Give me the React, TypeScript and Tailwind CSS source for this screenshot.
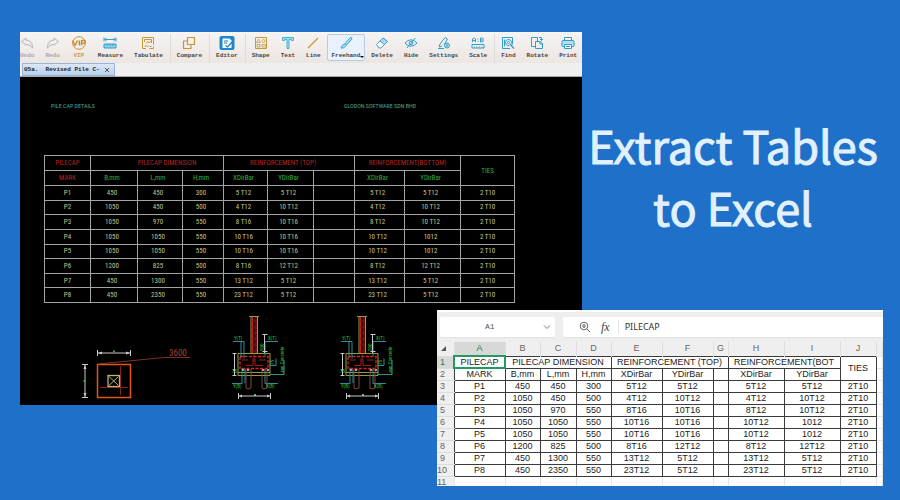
import React from "react";

const AMBER = "#c39a3a";
const CYAN = "#2f9fcb";

type IconProps = { children: React.ReactNode; color?: string; width?: number };

function Icon({ children, color = CYAN, width = 14 }: IconProps) {
  return (
    <svg
      width={width}
      height="14"
      viewBox={`0 0 ${width} 14`}
      fill="none"
      stroke={color}
      strokeWidth="1"
      strokeLinejoin="round"
      aria-hidden="true"
      className="shrink-0"
    >
      {children}
    </svg>
  );
}

const icons = {
  undo: (
    <Icon color="#b5b3b3">
      <path d="M1.5 5.5 6 2v2.2c4.3 0 6.5 2.7 6.5 8C11 9.500 9.300 8.700 6 8.700V9z" />
    </Icon>
  ),
  redo: (
    <Icon color="#b5b3b3">
      <path d="M12.5 5.5 8 2v2.2c-4.3 0-6.5 2.7-6.5 8C3 9.500 4.700 8.700 8 8.700V9z" />
    </Icon>
  ),
  vip: (
    <Icon color="#c8922c" width={16}>
      <circle cx="8" cy="7" r="6.300" />
      <path d="M1.500 4.500 4 9.500 6.500 4.500M8.300 4.500v5M10.500 9.500v-5h2.300c2 0 2 2.700 0 2.700h-2.300" strokeWidth="1.500" />
    </Icon>
  ),
  measure: (
    <Icon>
      <path d="M1 1.500v4M13 1.500v4M1.500 3.500h11M3.500 2 1.800 3.500l1.700 1.500M10.500 2l1.700 1.500-1.700 1.500" />
      <rect x="1" y="8" width="12" height="4" fill="#8fd2e8" />
      <path d="M4 8v2M7 8v2M10 8v2" />
    </Icon>
  ),
  tabulate: (
    <Icon color={AMBER}>
      <path d="M5 12.500H1.500v-11h11v7M8.500 12.500h4v-2M3.500 6V3.500h7V7M3.500 10h4M5 7.500 7 5.500l1 1.500 2-2M8.500 10.500h2" />
    </Icon>
  ),
  compare: (
    <Icon color={AMBER}>
      <path d="M5.500 1.500h7v7h-7zM5.500 5h-4v7.500h7.500v-4" strokeWidth="1.200" />
    </Icon>
  ),
  editor: (
    <Icon width={16} color="#1680cc">
      <rect x="0.500" y="0" width="15" height="14" rx="2" fill="#1b86d1" stroke="none" />
      <path d="M3.500 2.500h7l2 2V12h-9z" fill="#fff" stroke="none" />
      <path d="M5 5h4M5 7h3M6.500 9.500l2 1.500 4.500-5" strokeWidth="1.200" />
    </Icon>
  ),
  shape: (
    <Icon color={AMBER}>
      <rect x="1.500" y="1.500" width="11" height="11" />
      <path d="M2.500 6.500 4.500 3l2 3.500zM3 8.500h3v2.500H3zM8 8.500h3.500v2.500H8z" strokeWidth="0.800" />
      <circle cx="9.500" cy="5" r="1.500" strokeWidth="0.800" />
    </Icon>
  ),
  text: (
    <Icon color="#4ab2d8">
      <path d="M1.500 4.500v-3h11v3h-2v-1H8v9H6v-9H3.500v1z" fill="#9edcf0" />
    </Icon>
  ),
  line: (
    <Icon color={AMBER}>
      <path d="M2 12 12 2" strokeWidth="1.200" />
    </Icon>
  ),
  freehand: (
    <Icon>
      <path d="M6 7.500 11.500 1.500q2 0 1.200 1.700L7.500 9zM5.500 8 7 9.500 4.500 12H2q1-.8 1.200-2.500z" fill="#b5e4f5" />
    </Icon>
  ),
  remove: (
    <Icon color="#4a9fc6">
      <path d="M1.500 8.500 8 2l4.500 3.500L6 12H4z" fill="#fff" />
      <path d="M5 5 8 2l4.500 3.500-3 3z" fill="#a5def2" />
    </Icon>
  ),
  hide: (
    <Icon>
      <path d="M1 7q6-6.500 12 0-6 6.500-12 0zM11.500 2l-8.500 10" />
      <circle cx="7" cy="7" r="1.800" />
    </Icon>
  ),
  settings: (
    <Icon>
      <path d="M3 8 8 1.500l2.500 1.500L7 9M3 8l-1 3 3-1M1 12.500h6" />
      <circle cx="10" cy="9.500" r="2.500" fill="#c5e9f5" />
      <circle cx="10" cy="9.500" r="0.800" />
    </Icon>
  ),
  scale: (
    <Icon>
      <path d="M1.500 6V3l1-1h1l1 1v3M1.500 4.500h3M9.500 6V2h2l1 1-1 1 1 1-1 1zM9.500 4h2M7 2.500v1M7 5v1" />
      <rect x="1" y="8.500" width="12" height="3.500" />
      <path d="M3.500 10.500V12M6 10.500V12M8.500 10.500V12M11 10.500V12" strokeWidth="0.700" />
    </Icon>
  ),
  find: (
    <Icon>
      <path d="M9 12.500H1.500v-11h10v7M3.500 3.500v7" />
      <circle cx="7.500" cy="6.500" r="3" />
      <circle cx="7.500" cy="6.500" r="1" />
      <path d="m9.700 8.700 3.300 3.800" strokeWidth="1.300" />
    </Icon>
  ),
  rotate: (
    <Icon>
      <path d="M5.500 10.500h-4v-9h6v4M9 1.500h2.500V4M10 3l1.500 1.500L13 3M5.500 5.500h5l2 2v5h-7zM10 5.500v2.500h2.500" />
    </Icon>
  ),
  print: (
    <Icon>
      <path d="M3.500 4.500v-3h7v3" />
      <rect x="1" y="4.500" width="12" height="6" rx="1" fill="#b5e2f2" />
      <path d="M3.500 8.500h7v4h-7z" fill="#fff" />
      <path d="M5 10.500h4" />
    </Icon>
  ),
};

type Tool = { label: string; icon: React.ReactNode; tone?: string };

const toolGroups: Tool[][] = [
  [
    { label: "Undo", icon: icons.undo, tone: "text-[#aaa8a8]" },
    { label: "Redo", icon: icons.redo, tone: "text-[#aaa8a8]" },
    { label: "VIP", icon: icons.vip, tone: "text-[#c79c4b]" },
    { label: "Measure", icon: icons.measure },
    { label: "Tabulate", icon: icons.tabulate },
  ],
  [{ label: "Compare", icon: icons.compare }],
  [{ label: "Editor", icon: icons.editor }],
  [
    { label: "Shape", icon: icons.shape },
    { label: "Text", icon: icons.text },
    { label: "Line", icon: icons.line },
    { label: "Freehand", icon: icons.freehand },
    { label: "Delete", icon: icons.remove },
    { label: "Hide", icon: icons.hide },
    { label: "Settings", icon: icons.settings },
    { label: "Scale", icon: icons.scale },
  ],
  [
    { label: "Find", icon: icons.find },
    { label: "Rotate", icon: icons.rotate },
    { label: "Print", icon: icons.print },
  ],
];

function ToolButton({ label, icon, tone = "text-[#444]" }: Tool) {
  const active = label === "Freehand";
  return (
    <button
      type="button"
      aria-pressed={active}
      className={`relative flex shrink-0 flex-col items-center border pt-px ${
        active ? "-mx-[5px] rounded-xs border-[#b7cbe8] bg-[#e9f1fb] px-1" : "-mx-px border-transparent"
      }`}
    >
      {icon}
      <span className={`mt-0.5 h-2 text-[6px] leading-[8px] font-bold whitespace-nowrap ${tone}`}>{label}</span>
      {active && (
        <span className="absolute right-0 bottom-0.5 border-x-2 border-t-2 border-x-transparent border-t-black" />
      )}
    </button>
  );
}

const schedule = [
  ["P1", "450", "450", "300", "5T12", "5T12", "", "5T12", "5T12", "2T10"],
  ["P2", "1050", "450", "500", "4T12", "10T12", "", "4T12", "10T12", "2T10"],
  ["P3", "1050", "970", "550", "8T16", "10T16", "", "8T12", "10T12", "2T10"],
  ["P4", "1050", "1050", "550", "10T16", "10T16", "", "10T12", "1012", "2T10"],
  ["P5", "1050", "1050", "550", "10T16", "10T16", "", "10T12", "1012", "2T10"],
  ["P6", "1200", "825", "500", "8T16", "12T12", "", "8T12", "12T12", "2T10"],
  ["P7", "450", "1300", "550", "13T12", "5T12", "", "13T12", "5T12", "2T10"],
  ["P8", "450", "2350", "550", "23T12", "5T12", "", "23T12", "5T12", "2T10"],
];

const subHeads = ["MARK", "B,mm", "L,mm", "H,mm", "XDirBar", "YDirBar", "", "XDirBar", "YDirBar"];

// Bar marks are lettered with a thin gap between the count and the bar type.
const cadText = (value: string) => value.replace("T", "\u2009T");

function CadTable() {
  const cell = "border border-[#a3a3a3] py-0 pl-0 font-normal";
  return (
    <table className="h-[148px] w-[471px] table-fixed border-collapse text-center text-[7px] leading-[10px] text-[#c4c48c]">
      <colgroup>
        <col className="w-[46px]" />
        <col className="w-[47px]" />
        <col className="w-[45px]" />
        <col className="w-[41px]" />
        <col className="w-[44px]" />
        <col className="w-[46px]" />
        <col className="w-[41px]" />
        <col className="w-[50px]" />
        <col className="w-[56px]" />
        <col className="w-[54px]" />
      </colgroup>
      <thead>
        <tr className="h-[15px] text-[#b32424]">
          <th className={cell}>PILECAP</th>
          <th className="border border-[#a3a3a3] py-0 pr-0 pl-5 font-normal" colSpan={3}>PILECAP DIMENSION</th>
          <th className={`${cell} pr-3`} colSpan={3}>REINFORCEMENT (TOP)</th>
          <th className={cell} colSpan={2}>REINFORCEMENT(BOTTOM)</th>
          <th className={`${cell} text-[#2fae42]`} rowSpan={2}>TIES</th>
        </tr>
        <tr className="h-[15px]">
          {subHeads.map((head, i) => (
            <th key={i} className={`${cell} ${i === 0 ? "text-[#b32424]" : "pr-1 text-[#2fae42]"}`}>
              {head}
            </th>
          ))}
        </tr>
      </thead>
      <tbody>
        {schedule.map((row) => (
          <tr key={row[0]}>
            {row.map((value, i) => (
              <td key={i} className={`${cell} ${i > 0 && i < 9 ? "pr-1" : "pr-0"}`}>{cadText(value)}</td>
            ))}
          </tr>
        ))}
      </tbody>
    </table>
  );
}

function PlanView() {
  return (
    <svg width="110" height="62" viewBox="0 -6 110 62" fill="none" className="shrink-0">
      <g stroke="#c9c9c9" strokeWidth="1">
        <path d="M17.500 1v6M50.500 1v6M18 4h32M2 15.500h6M2 48.500h6M5 16v32" />
      </g>
      <g fill="#c9c9c9">
        <path d="m18 4 4-1.500v3zM50 4l-4-1.500v3zM5 16l-1.500 4h3zM5 48l-1.500-4h3z" />
      </g>
      <path d="M33 2.500h2M4.500 31v2" stroke="#2fae42" strokeWidth="2" />
      <path d="M40.500 17v29M20 38.500h28" stroke="#8f1d1d" />
      <rect x="17.500" y="15.500" width="33" height="33" stroke="#e0561c" strokeWidth="1.500" />
      <g stroke="#b5b573">
        <rect x="28" y="26.500" width="11.500" height="11" strokeWidth="1.300" />
        <path d="m29 27.500 9.500 9M38.500 27.500l-9.500 9" />
      </g>
      <path d="M18 15 84 8.500h26" stroke="#9d3d2c" strokeWidth="0.800" />
      <text x="89" y="7" fontSize="9" fill="#a8442f">3600</text>
    </svg>
  );
}

function SectionView() {
  return (
    <svg width="70" height="92" viewBox="0 0 70 92" fill="none" className="shrink-0">
      <path d="M26.500 4v36M30 4v36" stroke="#c81e1e" />
      <path d="M26 8h5M26 14h5M26 20h5M26 26h5M26 32h5M26 38h5M28 5v44" stroke="#7d1717" />
      <g stroke="#9c9a45">
        <path d="M25 3v37M31.500 3v37M23 3.500h10M12 40.500h32v22H12zM12 59.500h32" />
      </g>
      <path d="M14 43.500h28v12H14z" stroke="#e02020" strokeWidth="1.300" strokeDasharray="3 1.500" />
      <path d="M20 52.500h7v-7M29 45.500v7h8M16 47h6M33 47h7" stroke="#a81b1b" />
      <g stroke="#2c8d9c">
        <path d="M7 28.500h11v17M15 28.500v16M52 28.500H39v14M6 70.500h10V55M19 56v14M39 56v14.500h13M44 52.500h6v-7M44 61.500h14V47" />
      </g>
      <g stroke="#c9c9c9">
        <path d="M8.500 40v22M6.500 40.500h4M6.500 62.500h4M38.500 21v19M36.500 21.500h5M36.500 38.500h5M12.500 80v6M44.500 80v6M13 83h31" />
      </g>
      <path d="m13 83 3-1.500v3zM44 83l-3-1.500v3z" fill="#c9c9c9" />
      <path d="M20 58v17M25 58v17M36 58v17M41 58v17M18 57h8M35 57h8M20 75l2 1 3-1M36 75l2 1 3-1" stroke="#7c4a40" />
      <path d="M16 57h2M21 57h2M36 57h2M41 57h2M28 82h2M8 56v2" stroke="#9adbe2" strokeWidth="1.500" />
      <g fill="#31c043" fontSize="5">
        <text x="8" y="27">Y(T)</text>
        <text x="42" y="27">X(T)</text>
        <text x="7" y="75">Y(B)</text>
        <text x="40" y="75">X(B)</text>
        <text x="6" y="60">75</text>
        <text transform="translate(37.500 38) rotate(-90)">500</text>
        <text transform="translate(48 52) rotate(-90)">75</text>
        <text transform="translate(58 62) rotate(-90)">Lean Concrete</text>
      </g>
    </svg>
  );
}

function CadWindow() {
  return (
    <section className="min-w-0 flex-1 overflow-hidden bg-black" aria-label="Drawing viewer">
      <div className="flex h-[31px] overflow-hidden border-t border-[#f8f8fb] bg-linear-to-b from-[#f6f3f3] to-[#ece6e2] pt-px font-['Liberation_Mono',monospace]">
        {toolGroups.map((group, i) => (
          <div
            key={i}
            className={`flex shrink-0 items-start gap-[11px] ${
              i > 0 ? "ml-[7px] border-l border-[#dedada] pl-1.5" : ""
            }`}
          >
            {group.map((tool) => (
              <ToolButton key={tool.label} {...tool} />
            ))}
          </div>
        ))}
      </div>
      <div className="flex h-[14px] items-end border-b border-[#a7a7a7] bg-[#efefef] pl-0.5">
        <button
          type="button"
          className="flex h-[13px] items-center gap-1 border border-[#9ab4d8] bg-linear-to-b from-[#dce8f7] to-[#b9cfec] pr-1 pl-px font-['Liberation_Mono',monospace] text-[6px] leading-[8px] font-bold text-[#222]"
        >
          <span className="whitespace-pre">05a.  Revised Pile C-</span>
          <svg width="6" height="6" viewBox="0 0 6 6" stroke="#555" aria-hidden="true">
            <path d="m1 1 4 4M5 1 1 5" />
          </svg>
        </button>
      </div>
      <div className="flex flex-col pt-6 font-['Liberation_Sans_Narrow','Roboto_Condensed','Liberation_Sans',sans-serif]">
        <div className="flex gap-[249px] pl-[31px] text-[6px] leading-[10px] whitespace-nowrap text-[#4fa596]">
          <span>PILE CAP DETAILS</span>
          <span>GLODON SOFTWARE SDN BHD</span>
        </div>
        <div className="mt-11 pl-6">
          <CadTable />
        </div>
        <div className="mt-2.5 flex items-end gap-9 pl-[60px]">
          <PlanView />
          <div className="flex gap-[38px]">
            <SectionView />
            <SectionView />
          </div>
        </div>
      </div>
    </section>
  );
}

const letters = ["A", "B", "C", "D", "E", "F", "G", "H", "I", "J", ""];

function Sheet() {
  const box = "border border-[#3a3a3a] p-0 text-center font-normal whitespace-nowrap";
  const gutter = "border-y border-[#dddddd] bg-[#efefef] py-0 pr-0 text-left font-normal text-[#666]";
  const spare = "border border-[#e6e6e6] p-0";
  return (
    <table className="w-full table-fixed border-collapse bg-white font-['Liberation_Sans',Arial,sans-serif] text-[9px] leading-[11px] text-[#1c1c1c]">
      <colgroup>
        <col className="w-[17px]" />
        <col className="w-[51px]" />
        <col className="w-[35px]" />
        <col className="w-[36px]" />
        <col className="w-[35px]" />
        <col className="w-[51px]" />
        <col className="w-[51px]" />
        <col className="w-[15px]" />
        <col className="w-[56px]" />
        <col className="w-[56px]" />
        <col className="w-[36px]" />
        <col />
      </colgroup>
      <thead>
        <tr className="h-[14px] bg-[#efefef] text-[#666]">
          <th className="p-0">
            <svg width="5" height="5" viewBox="0 0 5 5" className="ml-1" aria-hidden="true">
              <path d="M5 0v5H0z" fill="#555" />
            </svg>
          </th>
          {letters.map((letter, i) => (
            <th
              key={i}
              className={`border-x border-[#dedede] p-0 font-normal ${i === 0 ? "bg-[#d8d8d8] text-[#1c7d50]" : ""}`}
            >
              {letter}
            </th>
          ))}
        </tr>
      </thead>
      <tbody>
        <tr className="h-3">
          <th className="border-y border-[#dddddd] bg-[#d8d8d8] py-0 pr-0 pl-[3px] text-left font-normal text-[#1c7d50]">1</th>
          <td className={`${box} outline-2 -outline-offset-1 outline-[#249a63]`}>PILECAP</td>
          <td className={box} colSpan={3}>PILECAP DIMENSION</td>
          <td className={box} colSpan={3}>REINFORCEMENT (TOP)</td>
          <td className={box} colSpan={2}>REINFORCEMENT(BOT</td>
          <td className={box} rowSpan={2}>TIES</td>
          <td className={spare} />
        </tr>
        <tr className="h-3">
          <th className={`${gutter} pl-[3px]`}>2</th>
          {subHeads.map((head, i) => (
            <td key={i} className={box}>{head}</td>
          ))}
          <td className={spare} />
        </tr>
        {schedule.map((row, r) => (
          <tr key={row[0]} className="h-3">
            <th className={`${gutter} ${r === 7 ? "pl-0" : "pl-[3px]"}`}>{r + 3}</th>
            {row.map((value, i) => (
              <td key={i} className={box}>{value}</td>
            ))}
            <td className={spare} />
          </tr>
        ))}
        <tr className="h-3">
          <th className={`${gutter} pl-0`}>11</th>
          {letters.map((_, i) => (
            <td key={i} className={spare} />
          ))}
        </tr>
      </tbody>
    </table>
  );
}

function ExcelWindow() {
  return (
    <section
      className="absolute right-[17px] bottom-[14px] h-[176px] w-[446px] overflow-hidden border-t-2 border-white bg-[#efeeef]"
      aria-label="Spreadsheet"
    >
      <div className="mt-[5px] flex h-5 gap-2 pl-[3px]">
        <div className="relative flex w-[115px] shrink-0 items-center rounded-xs bg-white shadow-xs">
          <select
            aria-label="Name box"
            defaultValue="A1"
            className="h-3 w-full appearance-none pl-[45px] font-['Liberation_Mono',monospace] text-[8px] leading-[12px] text-[#555] outline-none"
          >
            <option>A1</option>
          </select>
          <svg width="8" height="8" viewBox="0 0 8 8" fill="none" stroke="#777" className="absolute top-1.5 right-1" aria-hidden="true">
            <path d="m1 2.500 3 3 3-3" />
          </svg>
        </div>
        <div className="flex min-w-0 flex-1 items-center rounded-l-xs bg-white pl-4 shadow-xs">
          <svg width="12" height="12" viewBox="0 0 12 12" fill="none" stroke="#666" aria-hidden="true">
            <circle cx="5" cy="5" r="3.800" />
            <path d="m8 8 3 3M3 5h4M4 3.800h2M4 6.200h2" />
          </svg>
          <label
            htmlFor="formula"
            className="ml-2.5 border-r border-[#e2e2e2] pr-2 font-['Liberation_Serif',serif] text-[12px] leading-[14px] text-[#444] italic"
          >
            fx
          </label>
          <input
            id="formula"
            defaultValue="PILECAP"
            className="min-w-0 flex-1 pl-1.5 font-['Noto_Sans',sans-serif] text-[9px] text-[#333] outline-none"
          />
        </div>
      </div>
      <div className="mt-[5px]">
        <Sheet />
      </div>
    </section>
  );
}

export default function App() {
  return (
    <main className="relative min-h-screen overflow-hidden bg-[#1e70c8]">
      <div className="flex items-start pt-8 pl-5">
        <CadWindow />
        <h1 className="w-[318px] shrink-0 pt-[82px] pr-4 text-center font-['Noto_Sans_CJK_SC',sans-serif] text-[45px] leading-[62px] font-normal whitespace-nowrap text-[#e1f0fd] [-webkit-text-stroke:1px_#e1f0fd]">
          Extract Tables
          <br />
          to Excel
        </h1>
      </div>
      <ExcelWindow />
    </main>
  );
}
